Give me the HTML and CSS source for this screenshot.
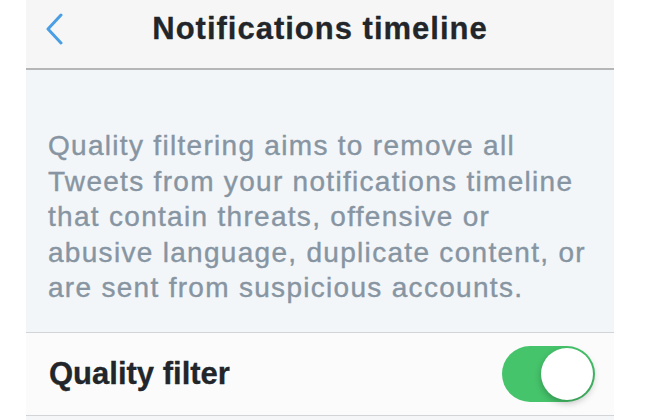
FILE: index.html
```html
<!DOCTYPE html>
<html lang="en">
<head>
    <meta charset="UTF-8">
    <meta name="viewport" content="width=device-width, initial-scale=1.0">
    <title>Notifications timeline</title>
    <link rel="stylesheet" href="styles.css">
</head>
<body>

    <div class="screen">
        <div class="navbar">
            <a href="#" class="back">
                <svg width="18" height="32" viewBox="0 0 18 32">
                    <polyline points="16,2 3,16 16,30" fill="none" stroke="#4a9ee3" stroke-width="3" stroke-linecap="round" stroke-linejoin="round"/>
                </svg>
            </a>
            <h1 class="title">Notifications timeline</h1>
        </div>

        <div class="content">
            <p class="description">Quality filtering aims to remove all Tweets from your notifications timeline that contain threats, offensive or abusive language, duplicate content, or are sent from suspicious accounts.</p>
        </div>

        <div class="row">
            <span class="row-label">Quality filter</span>
            <label class="switch on">
                <span class="knob"></span>
            </label>
        </div>
    </div>

</body>
</html>
```

FILE: styles.css
```css
body {
    font-family: "Liberation Sans", Arial, sans-serif;
    background-color: #fff;
    margin: 0;
    padding: 0;
}
.screen {
    margin-left: 26px;
    width: 588px;
    height: 420px;
    background-color: #f4f6f8;
    overflow: hidden;
}
.navbar {
    position: relative;
    height: 70px;
    box-sizing: border-box;
    padding-bottom: 12px;
    display: flex;
    align-items: center;
    justify-content: center;
    background-color: #f6f6f6;
    border-bottom: 2px solid #b6b6b6;
}
.back {
    position: absolute;
    left: 19px;
    top: 13px;
    display: block;
    line-height: 0;
}
.title {
    margin: 0;
    font-size: 31px;
    line-height: 31px;
    letter-spacing: 1px;
    font-weight: bold;
    color: #22262a;
    -webkit-text-stroke: 0.3px #22262a;
}
.content {
    padding: 58px 18px 26px 22px;
    background-color: #f3f6f9;
    border-bottom: 1px solid #d2d5d8;
}
.description {
    margin: 0;
    font-size: 28px;
    line-height: 35.5px;
    letter-spacing: 1.3px;
    color: #8795a2;
    -webkit-text-stroke: 0.4px #8795a2;
}
.row {
    height: 82px;
    display: flex;
    align-items: center;
    justify-content: space-between;
    padding: 0 19px 0 23px;
    background-color: #fbfbfb;
    border-bottom: 1px solid #d2d5d8;
}
.row-label {
    font-size: 31px;
    font-weight: bold;
    color: #22262a;
    -webkit-text-stroke: 0.3px #22262a;
}
.switch {
    position: relative;
    display: block;
    width: 93px;
    height: 56px;
    border-radius: 28px;
    background-color: #e5e5e5;
}
.switch.on {
    background-color: #46c46b;
}
.knob {
    position: absolute;
    right: 2px;
    top: 2px;
    width: 52px;
    height: 52px;
    border-radius: 50%;
    background-color: #fff;
    box-shadow: 0 3px 7px rgba(0, 0, 0, 0.25);
}
```
